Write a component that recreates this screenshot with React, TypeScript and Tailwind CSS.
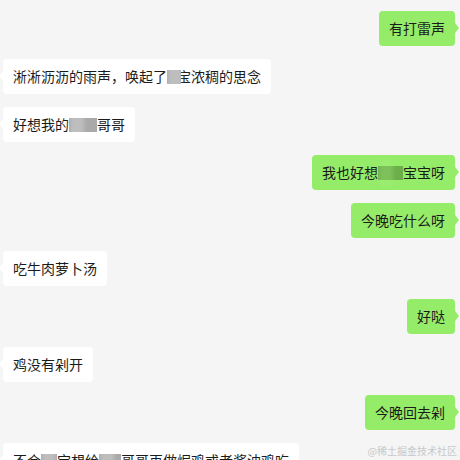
type Part = string | { blur: number; shift?: number }

interface Msg {
  side: 'left' | 'right'
  parts: Part[]
}

const MESSAGES: Msg[] = [
  { side: 'right', parts: ['有打雷声'] },
  { side: 'left', parts: ['淅淅沥沥的雨声，唤起了', { blur: 14, shift: -4 }, '宝浓稠的思念'] },
  { side: 'left', parts: ['好想我的', { blur: 28 }, '哥哥'] },
  { side: 'right', parts: ['我也好想', { blur: 25 }, '宝宝呀'] },
  { side: 'right', parts: ['今晚吃什么呀'] },
  { side: 'left', parts: ['吃牛肉萝卜汤'] },
  { side: 'right', parts: ['好哒'] },
  { side: 'left', parts: ['鸡没有剁开'] },
  { side: 'right', parts: ['今晚回去剁'] },
  { side: 'left', parts: ['不会', { blur: 16 }, '宝想给', { blur: 22 }, '哥哥再做焗鸡或者酱油鸡吃'] },
]

function Bubble({ msg }: { msg: Msg }) {
  const right = msg.side === 'right'
  return (
    <div className={`flex ${right ? 'justify-end' : 'justify-start'}`}>
      <div
        className={`relative rounded-[4px] px-[10px] py-[7px] text-[14px] leading-[21px] text-[#1b1b1b] whitespace-nowrap ${
          right ? 'bg-[#95ec69]' : 'bg-white'
        }`}
      >
        {/* tail */}
        <span
          className={`absolute top-[12px] h-0 w-0 border-y-[5px] border-y-transparent ${
            right
              ? 'right-[-4px] border-l-[4px] border-l-[#95ec69]'
              : 'left-[-4px] border-r-[4px] border-r-white'
          }`}
        />
        {msg.parts.map((p, i) =>
          typeof p === 'string' ? (
            <span key={i}>{p}</span>
          ) : (
            <span
              key={i}
              className={`relative inline-block h-[14px] align-[-2px] blur-[0.5px] ${
                right ? 'bg-[#6cae4a]' : 'bg-[#a9a9a9]'
              }`}
              style={{ width: p.blur, marginRight: p.shift ?? 0 }}
            >
              <span
                className={`absolute left-[1px] top-[-8px] h-[30px] w-[14px] rounded-full blur-[2px] ${
                  right ? 'bg-[#a9ef84]/30' : 'bg-white/25'
                }`}
              />
            </span>
          )
        )}
      </div>
    </div>
  )
}

export default function App() {
  return (
    <div
      className="relative h-[460px] w-[460px] overflow-hidden bg-[#f5f5f5]"
      style={{ fontFamily: '"Noto Sans CJK SC", "Noto Sans", sans-serif' }}
    >
      <div className="flex flex-col gap-[13px] pl-[3px] pr-[5px] pt-[11px]">
        {MESSAGES.map((m, i) => (
          <Bubble key={i} msg={m} />
        ))}
      </div>
      <div className="absolute bottom-[2px] right-[3px] text-[10px] leading-[14px] text-[#c8c8c8]">
        @稀土掘金技术社区
      </div>
    </div>
  )
}
